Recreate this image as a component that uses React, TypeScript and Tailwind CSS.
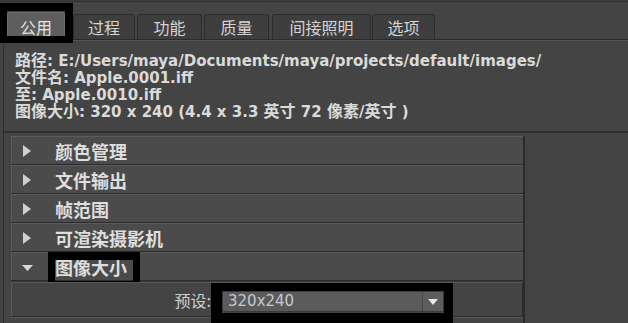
import React from "react";

const cjk = '"Noto Sans CJK SC", "Noto Sans CJK JP", sans-serif';
const latin = '"DejaVu Sans", "Noto Sans CJK SC", sans-serif';

function C({ children }: { children: React.ReactNode }) {
  return (
    <span className="text-[16px] font-bold leading-[17px]" style={{ fontFamily: cjk }}>
      {children}
    </span>
  );
}

function TriRight() {
  return (
    <svg width="8" height="12" viewBox="0 0 8 12" className="shrink-0">
      <path d="M0 0 L8 6 L0 12 Z" fill="#cfcfcf" />
    </svg>
  );
}

function TriDown() {
  return (
    <svg width="11" height="6" viewBox="0 0 11 6" className="shrink-0">
      <path d="M0 0 L11 0 L5.5 6 Z" fill="#d8d8d8" />
    </svg>
  );
}

function Row({ label, open, annotate }: { label: string; open?: boolean; annotate?: boolean }) {
  return (
    <div className="relative flex h-[28px] w-[512px] items-center border-t border-l border-[#5c5c5c] bg-[#4b4b4b]">
      <div className={open ? "ml-[10px] mt-[2px] flex w-[33px]" : "ml-[11px] flex w-[32px]"}>
        {open ? <TriDown /> : <TriRight />}
      </div>
      <span className="text-[18px] font-bold leading-none text-[#dedede]" style={{ fontFamily: cjk }}>
        {label}
      </span>
      {annotate && (
        <div className="pointer-events-none absolute left-[36px] top-[-1px] h-[36px] w-[92px] border-[7px] border-t-[8px] border-black" />
      )}
    </div>
  );
}

function Tab({ label, w, ml }: { label: string; w: string; ml: string }) {
  return (
    <div
      className={`${ml} ${w} mt-[10px] flex h-[25px] items-center justify-center rounded-t-[3px] border border-b-0 border-[#2c2c2c] bg-[#3e3e3e] text-[16px] text-[#d4d4d4]`}
    >
      {label}
    </div>
  );
}

export default function App() {
  return (
    <div className="relative h-[323px] w-[628px] overflow-hidden bg-[#444444]" style={{ fontFamily: latin }}>
      {/* top strip */}
      <div className="h-[3px] bg-[#393939]" />
      <div className="h-px bg-[#4e4e4e]" />

      {/* tab bar */}
      <div className="relative flex h-[35px] items-start" style={{ fontFamily: cjk }}>
        <div className="relative z-10 ml-[7px] mt-[8px] flex h-[30px] w-[58px] items-center justify-center rounded-t-[2px] border border-[#6c6c6c] bg-[#5e5e5e] text-[16px] text-[#e4e4e4]">
          公用
        </div>
        <Tab label="过程" ml="ml-[8px]" w="w-[62px]" />
        <Tab label="功能" ml="ml-[2px]" w="w-[65px]" />
        <Tab label="质量" ml="ml-[2px]" w="w-[65px]" />
        <Tab label="间接照明" ml="ml-[3px]" w="w-[99px]" />
        <Tab label="选项" ml="ml-[1px]" w="w-[63px]" />
        {/* annotation frame around active tab */}
        <div className="pointer-events-none absolute left-0 top-[-1px] z-20 h-[40px] w-[73px] border-[7px] border-t-[8px] border-r-[8px] border-black" />
      </div>
      <div className="h-px bg-[#2a2a2a]" />
      <div className="h-px bg-[#545454]" />

      {/* content */}
      <div className="ml-[3px] border-l border-[#2c2c2c]">
        <div className="pl-[11px] pt-[10px] text-[15px] font-bold leading-[17px] text-[#dadada]">
          <div className="h-[17px] whitespace-nowrap">
            <C>路径</C>: E:/Users/maya/Documents/maya/projects/default/images/
          </div>
          <div className="h-[17px] whitespace-nowrap">
            <C>文件名</C>: Apple.0001.iff
          </div>
          <div className="h-[17px] whitespace-nowrap">
            <C>至</C>: Apple.0010.iff
          </div>
          <div className="h-[17px] whitespace-nowrap">
            <C>图像大小</C>: 320 x 240 (4.4 x 3.3 <C>英寸</C> 72 <C>像素</C>/<C>英寸</C> )
          </div>
        </div>

        <div className="mt-[12px] h-[2px] bg-[#2e2e2e]" />

        <div className="flex pl-[7px] pt-[3px]">
          <div className="flex flex-col">
            <div className="flex flex-col gap-px bg-[#2c2c2c] pb-px">
              <Row label="颜色管理" />
              <Row label="文件输出" />
              <Row label="帧范围" />
              <Row label="可渲染摄影机" />
              <Row label="图像大小" open annotate />
            </div>
            <div className="h-px bg-[#3a3a3a]" />
            {/* expanded content */}
            <div className="relative flex h-[35px] w-[512px] items-start border-t border-l border-[#585858] border-r border-r-[#2c2c2c] border-b border-b-[#2c2c2c] bg-[#444444]">
              <div
                className="w-[199px] pt-[7px] text-right text-[16px] leading-[20px] text-[#cfcfcf]"
                style={{ fontFamily: cjk }}
              >
                预设:
              </div>
              <div className="ml-[11px] mt-[8px] flex h-[21px] w-[222px] items-stretch border border-[#3a3a3a] bg-[#5b5b5b]">
                <div className="flex flex-1 items-center pl-[5px] text-[15px] text-[#c4c8d0]" style={{ fontFamily: latin }}>
                  320x240
                </div>
                <div className="flex w-[21px] items-center justify-center border-l border-[#464646] bg-[#5d5d5d]">
                  <svg width="10" height="6" viewBox="0 0 10 6">
                    <path d="M0 0 L10 0 L5 6 Z" fill="#e8e8e8" />
                  </svg>
                </div>
              </div>
              <div className="pointer-events-none absolute left-[199px] top-[0px] h-[40px] w-[242px] border-l-[11px] border-t-[8px] border-r-[9px] border-b-[10px] border-black" />
            </div>
            <div className="h-[10px] w-[512px] border-t border-[#585858] bg-[#444444]" />
          </div>
          <div className="w-[2px] bg-[#2b2b2b]" />
        </div>
      </div>
    </div>
  );
}
